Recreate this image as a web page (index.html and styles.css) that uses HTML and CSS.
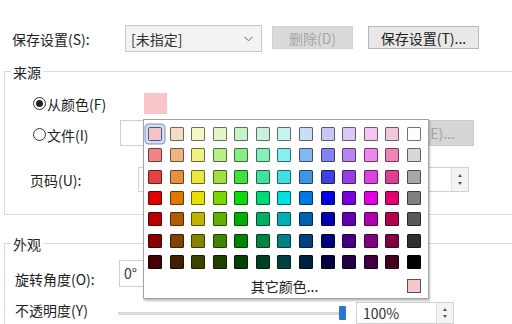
FILE: index.html
```html
<!DOCTYPE html>
<html lang="zh-CN">
<head>
<meta charset="utf-8">
<link rel="stylesheet" href="styles.css">
</head>
<body>
<div class="dlg">
  <div class="toprow">
    <span class="lbl-save">保存设置(S):</span>
    <div class="combo"><span>[未指定]</span><svg class="chev" width="9" height="6" viewBox="0 0 9 6"><path d="M0.5 0.8 L4.5 4.8 L8.5 0.8" fill="none" stroke="#666" stroke-width="1"/></svg></div>
    <button class="btn del">删除(D)</button>
    <button class="btn save">保存设置(T)...</button>
  </div>

  <div class="grp src">
    <span class="legend">来源</span>
    <div class="r r1"><span class="radio on"></span><span class="t1">从颜色(F)</span><span class="swatch"></span></div>
    <div class="r r2"><span class="radio"></span><span class="t2">文件(I)</span><div class="field file"></div><button class="btn browse">浏览(E)...</button></div>
    <div class="r r3"><span class="plbl">页码(U):</span><div class="spin page"><div class="spinbtns"><i class="up"></i><i class="dn"></i></div></div></div>
  </div>

  <div class="grp look">
    <span class="legend">外观</span>
    <div class="r r4"><span class="glbl">旋转角度(O):</span><div class="field rot">0°</div></div>
    <div class="r r5"><span class="glbl2">不透明度(Y)</span><div class="track"></div><div class="thumb"></div><div class="spin pct"><span class="val">100%</span><div class="spinbtns"><i class="up"></i><i class="dn"></i></div></div></div>
  </div>
</div>

<div class="popup">
  <div class="grid">
    <i class="sel" style="background:#f5c4c4"></i><i style="background:#f5dcc4"></i><i style="background:#f5f5c8"></i><i style="background:#e6f5c8"></i><i style="background:#c8f2c8"></i><i style="background:#c8f2dc"></i><i style="background:#c8f2f0"></i><i style="background:#c8def5"></i><i style="background:#c8c8f5"></i><i style="background:#dcc8f5"></i><i style="background:#f2c8f2"></i><i style="background:#f2c8dc"></i><i style="background:#ffffff"></i>
    <i style="background:#f08484"></i><i style="background:#f0b484"></i><i style="background:#f0f084"></i><i style="background:#b8f084"></i><i style="background:#84f084"></i><i style="background:#84f0b8"></i><i style="background:#84f0f0"></i><i style="background:#84b8f0"></i><i style="background:#8484f0"></i><i style="background:#b884f0"></i><i style="background:#f084f0"></i><i style="background:#f084b8"></i><i style="background:#d8d8d8"></i>
    <i style="background:#e84040"></i><i style="background:#e89040"></i><i style="background:#e8e840"></i><i style="background:#a0e040"></i><i style="background:#40e040"></i><i style="background:#40e0a0"></i><i style="background:#40e0e0"></i><i style="background:#4094e0"></i><i style="background:#4040e0"></i><i style="background:#9440e0"></i><i style="background:#e040e0"></i><i style="background:#e04094"></i><i style="background:#a8a8a8"></i>
    <i style="background:#e00000"></i><i style="background:#e07800"></i><i style="background:#e8e000"></i><i style="background:#78d800"></i><i style="background:#10d810"></i><i style="background:#00d878"></i><i style="background:#00e0e0"></i><i style="background:#0078e0"></i><i style="background:#0000e0"></i><i style="background:#7800d8"></i><i style="background:#e000e0"></i><i style="background:#e00070"></i><i style="background:#808080"></i>
    <i style="background:#b80000"></i><i style="background:#b05c00"></i><i style="background:#c0b400"></i><i style="background:#60b000"></i><i style="background:#00b000"></i><i style="background:#00b060"></i><i style="background:#00b0b0"></i><i style="background:#0060b0"></i><i style="background:#0000b0"></i><i style="background:#6000b0"></i><i style="background:#b000b0"></i><i style="background:#b00050"></i><i style="background:#585858"></i>
    <i style="background:#880000"></i><i style="background:#844000"></i><i style="background:#848400"></i><i style="background:#408400"></i><i style="background:#008400"></i><i style="background:#008444"></i><i style="background:#008080"></i><i style="background:#004080"></i><i style="background:#000080"></i><i style="background:#400080"></i><i style="background:#800080"></i><i style="background:#800040"></i><i style="background:#303030"></i>
    <i style="background:#440000"></i><i style="background:#402000"></i><i style="background:#404000"></i><i style="background:#204000"></i><i style="background:#004000"></i><i style="background:#004020"></i><i style="background:#004040"></i><i style="background:#002040"></i><i style="background:#000040"></i><i style="background:#200040"></i><i style="background:#400040"></i><i style="background:#400020"></i><i style="background:#000000"></i>
  </div>
  <div class="more"><span>其它颜色...</span><b></b></div>
</div>
</body>
</html>
```

FILE: styles.css
```css
html, body {
  margin: 0;
  width: 512px;
  height: 324px;
  overflow: hidden;
  background: #fff;
}
body {
  font-family: "Noto Sans CJK SC", "Noto Sans", sans-serif;
  font-size: 14px;
  color: #222;
}
.dlg {
  padding-top: 25px;
}
.toprow {
  display: flex;
  align-items: flex-start;
  padding-left: 12px;
  height: 27px;
}
.lbl-save {
  width: 113px;
  line-height: 18px;
  margin-top: 5px;
  flex: none;
}
.combo {
  width: 137px;
  height: 27px;
  box-sizing: border-box;
  border: 1px solid #c9c9c9;
  background: #f3f3f3;
  display: flex;
  align-items: center;
  justify-content: space-between;
  padding: 0 8px 0 5px;
  flex: none;
}
.combo span {
  line-height: 18px;
  color: #333;
}
.btn {
  box-sizing: border-box;
  font: inherit;
  padding: 0;
  flex: none;
}
.del {
  width: 81px;
  height: 23px;
  margin: 1px 0 0 10px;
  background: #dadada;
  border: 1px solid #d0d0d0;
  color: #a6a6a6;
  line-height: 20px;
}
.save {
  width: 111px;
  height: 23px;
  margin: 1px 0 0 15px;
  background: #e8e8e8;
  border: 1px solid #b8b8b8;
  color: #222;
  line-height: 20px;
}

.grp {
  border: 1px solid #dcdcdc;
  border-right: none;
  margin-left: 4px;
}
.legend {
  display: block;
  width: fit-content;
  line-height: 16px;
  padding: 0 2px;
  background: #fff;
  margin-top: -8px;
}
.src {
  margin-top: 19px;
  padding: 0 0 22px 25px;
}
.src .legend {
  margin-left: -19px;
}
.r {
  display: flex;
  align-items: center;
}
.r1 {
  margin: 13px 0 0 3px;
  height: 21px;
}
.radio {
  width: 13px;
  height: 13px;
  box-sizing: border-box;
  border: 1px solid #333;
  border-radius: 50%;
  margin-right: 1px;
  flex: none;
  display: flex;
  align-items: center;
  justify-content: center;
}
.radio.on::after {
  content: "";
  width: 7px;
  height: 7px;
  border-radius: 50%;
  background: #222;
}
.t1 {
  width: 97px;
  line-height: 18px;
  flex: none;
}
.swatch {
  width: 23px;
  height: 21px;
  background: #f8c6c8;
  flex: none;
}
.r2 {
  margin: 6px 0 0 3px;
  height: 26px;
}
.t2 {
  width: 73px;
  line-height: 18px;
  padding-top: 3px;
  flex: none;
}
.r2 .radio {
  margin-top: 3px;
}
.field {
  box-sizing: border-box;
  border: 1px solid #cfcfcf;
  background: #fff;
  flex: none;
}
.file {
  width: 247px;
  height: 26px;
}
.browse {
  width: 99px;
  height: 26px;
  margin-left: 8px;
  background: #d6d6d6;
  border: 1px solid #cacaca;
  color: #a0a0a0;
  text-align: right;
  padding-right: 18px;
}
.r3 {
  margin-top: 21px;
  height: 25px;
}
.plbl {
  width: 108px;
  line-height: 18px;
  flex: none;
}
.spin {
  box-sizing: border-box;
  border: 1px solid #d2d2d2;
  background: #fff;
  display: flex;
  justify-content: space-between;
  flex: none;
}
.page {
  width: 331px;
  height: 25px;
  justify-content: flex-end;
}
.spinbtns {
  width: 16px;
  border-left: 1px solid #e0e0e0;
  background: #f3f3f3;
  display: flex;
  flex-direction: column;
  align-items: center;
  justify-content: space-evenly;
}
.spinbtns i {
  width: 0;
  height: 0;
  border-left: 2.5px solid transparent;
  border-right: 2.5px solid transparent;
}
.spinbtns .up {
  border-bottom: 3px solid #555;
}
.spinbtns .dn {
  border-top: 3px solid #555;
}

.look {
  margin-top: 28px;
  padding: 0 0 0 10px;
  border-bottom: none;
}
.look .legend {
  margin-left: -4px;
}
.r4 {
  margin-top: 8px;
  height: 27px;
  align-items: flex-start;
}
.glbl {
  width: 104px;
  line-height: 16px;
  margin-top: 11px;
  flex: none;
}
.rot {
  width: 220px;
  height: 27px;
  padding-left: 4px;
  line-height: 25px;
  color: #333;
}
.r5 {
  margin-top: 15px;
  height: 22px;
}
.glbl2 {
  width: 103px;
  line-height: 16px;
  align-self: flex-start;
  flex: none;
}
.track {
  width: 221px;
  height: 3px;
  background: #e4e4e4;
  border: 1px solid #d8d8d8;
  box-sizing: border-box;
  flex: none;
}
.thumb {
  width: 7px;
  height: 14px;
  background: #2a78c8;
  border-radius: 1px;
  flex: none;
}
.pct {
  width: 98px;
  height: 22px;
  margin-left: 10px;
  align-items: stretch;
}
.pct .val {
  padding-left: 6px;
  line-height: 20px;
  color: #333;
}

.popup {
  position: absolute;
  left: 143px;
  top: 119px;
  width: 286px;
  height: 180px;
  box-sizing: border-box;
  border: 1px solid #a3a3a3;
  background: #fff;
  box-shadow: 1px 2px 2px rgba(0, 0, 0, 0.25);
  padding: 7px 7px 0 4px;
}
.grid {
  display: grid;
  grid-template-columns: repeat(13, 14px);
  grid-auto-rows: 14px;
  column-gap: 7.58px;
  row-gap: 7.33px;
}
.grid i {
  display: block;
  box-sizing: border-box;
  border: 1.5px solid rgba(0, 0, 0, 0.55);
  border-radius: 1.5px;
}
.grid i.sel {
  border-color: #4a5690;
  box-shadow: 0 0 0 2.5px #d6def4, 0 0 0 3.5px #8490c6;
}
.more {
  display: grid;
  grid-template-columns: 1fr auto 1fr;
  align-items: center;
  margin-top: 10px;
  height: 14px;
}
.more span {
  grid-column: 2;
  line-height: 14px;
  color: #222;
}
.more b {
  grid-column: 3;
  justify-self: end;
  width: 14px;
  height: 14px;
  box-sizing: border-box;
  background: #f5c8cc;
  border: 1.5px solid #555;
}
```
